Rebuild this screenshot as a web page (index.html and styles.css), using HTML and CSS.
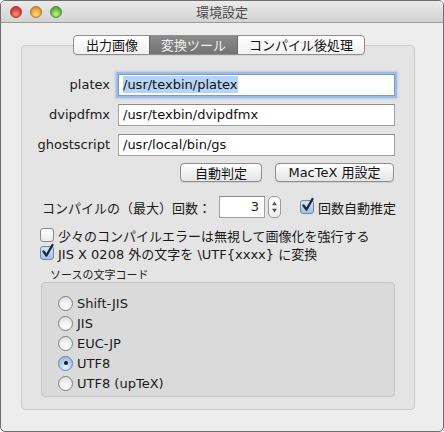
FILE: index.html
```html
<!DOCTYPE html>
<html>
<head>
<meta charset="utf-8">
<title>環境設定</title>
<link rel="stylesheet" href="styles.css">
</head>
<body>
<div class="window">
  <div class="titlebar">
    <div class="lights">
      <span class="light red"></span>
      <span class="light yellow"></span>
      <span class="light green"></span>
    </div>
    <div class="title">環境設定</div>
    <div></div>
  </div>
  <div class="content">
    <div class="tabs">
      <div class="tab">出力画像</div>
      <div class="tab selected">変換ツール</div>
      <div class="tab">コンパイル後処理</div>
    </div>
    <div class="panel">
      <div class="form">
        <div class="lbl">platex</div>
        <div class="field focused"><span class="sel">/usr/texbin/platex</span></div>
        <div class="lbl">dvipdfmx</div>
        <div class="field">/usr/texbin/dvipdfmx</div>
        <div class="lbl">ghostscript</div>
        <div class="field">/usr/local/bin/gs</div>
      </div>
      <div class="buttons">
        <div class="btn b1">自動判定</div>
        <div class="btn b2">MacTeX 用設定</div>
      </div>
      <div class="count-row">
        <span class="count-label">コンパイルの（最大）回数：</span>
        <div class="num">3</div>
        <div class="stepper">
          <svg width="12" height="22" viewBox="0 0 12 22"><path d="M6 5 L8.6 9 L3.4 9 Z" fill="#4a4a4a"/><path d="M6 17 L8.6 13 L3.4 13 Z" fill="#4a4a4a"/></svg>
        </div>
        <span class="cb checked"><svg width="18" height="18" viewBox="0 0 18 18"><path d="M4.5 8.5 L7.5 12.5 L13.5 2" fill="none" stroke="#1f2a3a" stroke-width="2.4" stroke-linecap="round" stroke-linejoin="round"/></svg></span>
        <span class="cb-text">回数自動推定</span>
      </div>
      <div class="check-row first">
        <span class="cb"></span>
        <span class="cb-text">少々のコンパイルエラーは無視して画像化を強行する</span>
      </div>
      <div class="check-row">
        <span class="cb checked"><svg width="18" height="18" viewBox="0 0 18 18"><path d="M4.5 8.5 L7.5 12.5 L13.5 2" fill="none" stroke="#1f2a3a" stroke-width="2.4" stroke-linecap="round" stroke-linejoin="round"/></svg></span>
        <span class="cb-text">JIS X 0208 外の文字を \UTF{xxxx} に変換</span>
      </div>
      <div class="legend">ソースの文字コード</div>
      <div class="group">
        <div class="radio-row"><span class="radio"></span><span class="r-text">Shift-JIS</span></div>
        <div class="radio-row"><span class="radio"></span><span class="r-text">JIS</span></div>
        <div class="radio-row"><span class="radio"></span><span class="r-text">EUC-JP</span></div>
        <div class="radio-row"><span class="radio on"></span><span class="r-text">UTF8</span></div>
        <div class="radio-row"><span class="radio"></span><span class="r-text">UTF8 (upTeX)</span></div>
      </div>
    </div>
  </div>
</div>
</body>
</html>
```

FILE: styles.css
```css
* { box-sizing: border-box; }
html, body { margin: 0; padding: 0; background: #ffffff; }
body {
  font-family: "DejaVu Sans", "Noto Sans CJK JP", sans-serif;
  font-size: 13px;
  color: #1a1a1a;
}
.window {
  width: 444px;
  height: 432px;
  border: 1px solid #6e6e6e;
  border-radius: 5px 5px 5px 5px;
  background: #ededed;
  overflow: hidden;
  display: flex;
  flex-direction: column;
}
.titlebar {
  height: 22px;
  flex: 0 0 22px;
  background: linear-gradient(#ebebeb, #d2d2d2);
  border-bottom: 1px solid #9b9b9b;
  display: grid;
  grid-template-columns: 1fr auto 1fr;
  align-items: center;
}
.lights {
  display: flex;
  gap: 8px;
  padding-left: 9px;
  align-items: center;
}
.light {
  width: 12px;
  height: 12px;
  border-radius: 50%;
  display: block;
}
.red { background: radial-gradient(circle at 50% 70%, #ff8f82 0%, #e0443a 55%, #a8271f 100%); border: 1px solid #9b3a33; }
.yellow { background: radial-gradient(circle at 50% 70%, #ffe08a 0%, #eca43a 55%, #b97a1d 100%); border: 1px solid #a4772c; }
.green { background: radial-gradient(circle at 50% 70%, #c4f09a 0%, #6ebd45 55%, #3f8a27 100%); border: 1px solid #4f8a36; }
.title {
  font-family: "Noto Sans CJK JP", sans-serif;
  font-size: 13px;
  color: #4a4a4a;
  line-height: 22px;
}
.content {
  padding: 12px 0 0 20px;
  display: flex;
  flex-direction: column;
  align-items: flex-start;
}
.tabs {
  position: relative;
  z-index: 2;
  align-self: flex-start;
  margin-left: 52px;
  display: flex;
  height: 20px;
  border: 1px solid #8f8f8f;
  border-radius: 4px;
  overflow: hidden;
  background: linear-gradient(#ffffff, #f0f0f0);
  box-shadow: 0 1px 0 rgba(0,0,0,0.06);
}
.tab {
  padding: 0 11px;
  line-height: 18px;
  font-family: "Noto Sans CJK JP", sans-serif;
  font-size: 13px;
  color: #111;
  border-left: 1px solid #9a9a9a;
}
.tab:first-child { border-left: none; padding: 0 11px 0 12px; }
.tab.selected {
  background: linear-gradient(#8b8b8b, #737373);
  color: #f1f1f1;
  border-left-color: #6a6a6a;
}
.tab.selected + .tab { border-left-color: #6a6a6a; }
.panel {
  margin-top: -10px;
  width: 394px;
  height: 365px;
  background: #e4e4e4;
  border: 1px solid #cdcdcd;
  border-radius: 4px;
  display: flex;
  flex-direction: column;
}
.form {
  margin-top: 28px;
  display: grid;
  grid-template-columns: 88px 277px;
  column-gap: 8px;
  row-gap: 8px;
  align-items: center;
}
.lbl {
  text-align: right;
  line-height: 22px;
  color: #1a1a1a;
}
.field {
  height: 22px;
  background: #ffffff;
  border: 1px solid #a2a2a2;
  border-top-color: #8c8c8c;
  padding-left: 4px;
  line-height: 20px;
  white-space: nowrap;
  overflow: hidden;
  color: #111;
}
.field.focused {
  border-color: #7a9ccc;
  box-shadow: 0 0 0 2px #9bbce6, 0 0 2px 3px rgba(120,160,220,0.35);
}
.sel {
  background: #b6d4f6;
  padding: 1px 0;
}
.buttons {
  margin-top: 7px;
  align-self: flex-end;
  margin-right: 20px;
  display: flex;
  gap: 13px;
}
.btn {
  height: 19px;
  line-height: 17px;
  border: 1px solid #8c8c8c;
  border-radius: 4px;
  background: linear-gradient(#ffffff, #f1f1f1 50%, #e6e6e6);
  box-shadow: 0 1px 0 rgba(0,0,0,0.08);
  text-align: center;
  font-size: 13px;
  color: #111;
}
.b1 { width: 82px; font-family: "Noto Sans CJK JP", sans-serif; }
.b2 { width: 119px; }
.count-row {
  margin-top: 14px;
  padding-left: 20px;
  display: flex;
  align-items: center;
  height: 22px;
}
.count-label {
  width: 177px;
  font-family: "Noto Sans CJK JP", sans-serif;
  white-space: nowrap;
}
.num {
  width: 46px;
  height: 22px;
  background: #fff;
  border: 1px solid #a2a2a2;
  border-top-color: #8c8c8c;
  text-align: right;
  padding-right: 5px;
  line-height: 20px;
}
.stepper {
  margin-left: 3px;
  width: 13px;
  height: 22px;
  border: 1px solid #9a9a9a;
  border-radius: 5px;
  background: linear-gradient(#ffffff, #ececec);
  display: flex;
  align-items: center;
  justify-content: center;
}
.stepper svg { display: block; }
.count-row .cb { margin-left: 19px; }
.cb {
  position: relative;
  width: 14px;
  height: 14px;
  flex: 0 0 14px;
  border: 1px solid #8a8a8a;
  border-radius: 3px;
  background: linear-gradient(#ffffff, #ececec);
  box-shadow: inset 0 1px 1px rgba(0,0,0,0.05);
}
.cb.checked {
  background: linear-gradient(#d9e8f8, #9fc1e8);
  border-color: #6f87a8;
}
.cb svg {
  position: absolute;
  left: -2px;
  top: -4px;
}
.cb-text {
  margin-left: 4px;
  font-family: "DejaVu Sans", "Noto Sans CJK JP", sans-serif;
  white-space: nowrap;
}
.check-row {
  padding-left: 18px;
  display: flex;
  align-items: center;
  height: 18px;
}
.check-row.first { margin-top: 8px; }
.legend {
  margin-top: 5px;
  padding-left: 28px;
  font-family: "Noto Sans CJK JP", sans-serif;
  font-size: 11px;
  line-height: 14px;
  height: 14px;
  color: #222;
}
.group {
  margin-top: 1px;
  margin-left: 19px;
  width: 354px;
  height: 115px;
  background: #dadada;
  border: 1px solid #c6c6c6;
  border-radius: 4px;
  padding: 10px 0 0 16px;
  display: flex;
  flex-direction: column;
}
.radio-row {
  height: 20px;
  display: flex;
  align-items: center;
}
.radio {
  width: 15px;
  height: 15px;
  border-radius: 50%;
  border: 1px solid #7f7f7f;
  background: radial-gradient(circle at 50% 80%, #ffffff 0%, #f2f2f2 45%, #d6d6d6 100%);
  position: relative;
}
.radio.on {
  background: radial-gradient(circle at 50% 80%, #e6f0fb 0%, #b5cfee 50%, #8eb1dd 100%);
  border-color: #6a82a4;
}
.radio.on::after {
  content: "";
  position: absolute;
  left: 4.5px;
  top: 4.5px;
  width: 4px;
  height: 4px;
  border-radius: 50%;
  background: #1a1a1a;
}
.r-text {
  margin-left: 4px;
  white-space: nowrap;
}
```
